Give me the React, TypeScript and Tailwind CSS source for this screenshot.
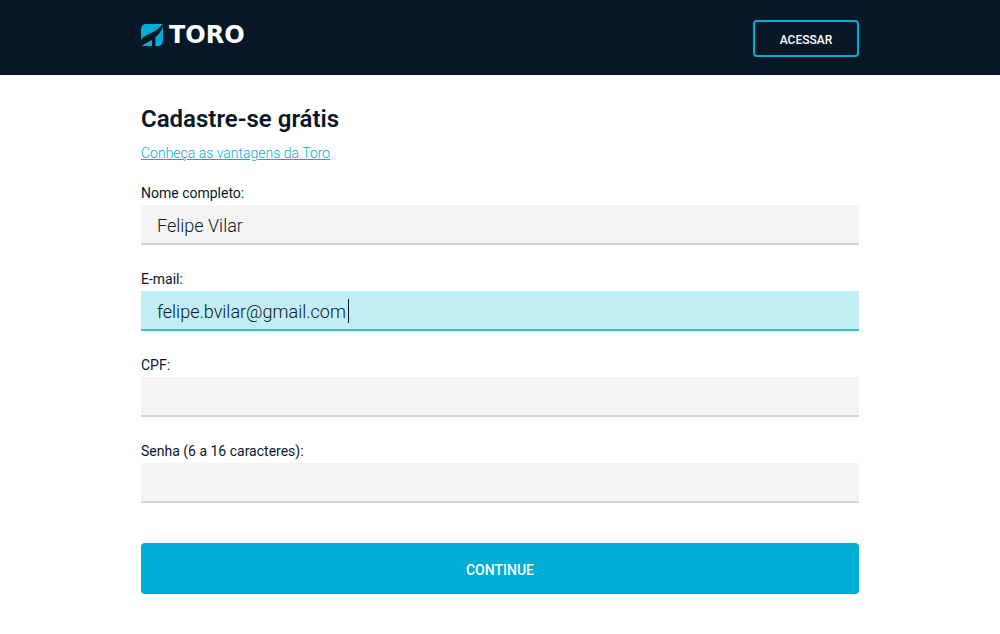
import { useEffect, useRef } from "react";

type FieldProps = {
  id: string;
  label: string;
  type?: string;
  defaultValue?: string;
  focused?: boolean;
};

function Field({ id, label, type = "text", defaultValue, focused = false }: FieldProps) {
  const ref = useRef<HTMLInputElement>(null);

  useEffect(() => {
    const input = ref.current;
    if (focused && input) {
      input.focus();
      input.setSelectionRange(input.value.length, input.value.length);
    }
  }, [focused]);

  return (
    <div className="flex flex-col">
      <label htmlFor={id} className="pb-0.5 text-sm leading-5">
        {label}
      </label>
      <div className="relative flex">
        <input
          ref={ref}
          id={id}
          name={id}
          type={type}
          defaultValue={defaultValue}
          className="peer h-10 w-full border-b-2 border-[#d0d4d7] bg-[#f4f4f4] px-4 pt-0.5 text-lg font-light text-[#071726] caret-transparent outline-none focus:border-[#3bbfdc] focus:bg-[#c1eef5]"
        />
        {focused && (
          <span
            aria-hidden="true"
            className="absolute top-2 left-[207px] hidden h-6 w-px bg-[#071726] peer-focus:block"
          />
        )}
      </div>
    </div>
  );
}

function Logo() {
  return (
    <a href="#" aria-label="Toro" className="flex items-center gap-1.5 text-white">
      <svg viewBox="0 0 22 22" className="size-[22px]" aria-hidden="true">
        <path
          fill="#00add5"
          d="M5.5 0H21.5C18.5 4.5 14.5 7.2 9 9.6C5 11.3 2.5 13 0 15.5V5.5C0 2 2 0 5.5 0Z"
        />
        <path
          fill="#00add5"
          d="M22 2.5V16.5C22 20 20 22 16.5 22H14.4V13.2C17.8 10.4 20.4 7 22 2.5Z"
        />
        <path fill="#00add5" d="M0.8 22C3.4 19.6 7 18.4 11 16V22Z" />
      </svg>
      <span className="font-['DejaVu_Sans',sans-serif] text-2xl leading-6 font-bold">TORO</span>
    </a>
  );
}

export default function App() {
  return (
    <div className="min-h-screen bg-white font-[Roboto,sans-serif] text-[#071726]">
      <header className="bg-[#071726] px-6 pt-5 pb-[18px]">
        <div className="mx-auto flex max-w-[718px] items-start justify-between">
          <div className="pt-[3px]">
            <Logo />
          </div>
          <button
            type="button"
            className="min-w-[106px] rounded border-2 border-[#00add5] px-6 pt-2 pb-[5px] text-xs leading-5 font-medium text-white"
          >
            ACESSAR
          </button>
        </div>
      </header>

      <main className="mx-auto max-w-[766px] px-6 pt-7 pb-10">
        <h1 className="text-2xl leading-8 font-semibold">Cadastre-se grátis</h1>
        <p className="mt-2 text-sm leading-5 font-light">
          <a href="#" className="text-[#00add5] underline">
            Conheça as vantagens da Toro
          </a>
        </p>

        <form className="mt-5 flex flex-col gap-6" onSubmit={(e) => e.preventDefault()}>
          <Field id="nome" label="Nome completo:" defaultValue="Felipe Vilar" />
          <Field id="email" label="E-mail:" defaultValue="felipe.bvilar@gmail.com" focused />
          <Field id="cpf" label="CPF:" />
          <Field id="senha" label="Senha (6 a 16 caracteres):" type="password" />
          <button
            type="submit"
            className="mt-4 w-full rounded bg-[#00add5] pt-[17px] pb-[14px] text-sm leading-5 font-medium text-white"
          >
            CONTINUE
          </button>
        </form>
      </main>
    </div>
  );
}
